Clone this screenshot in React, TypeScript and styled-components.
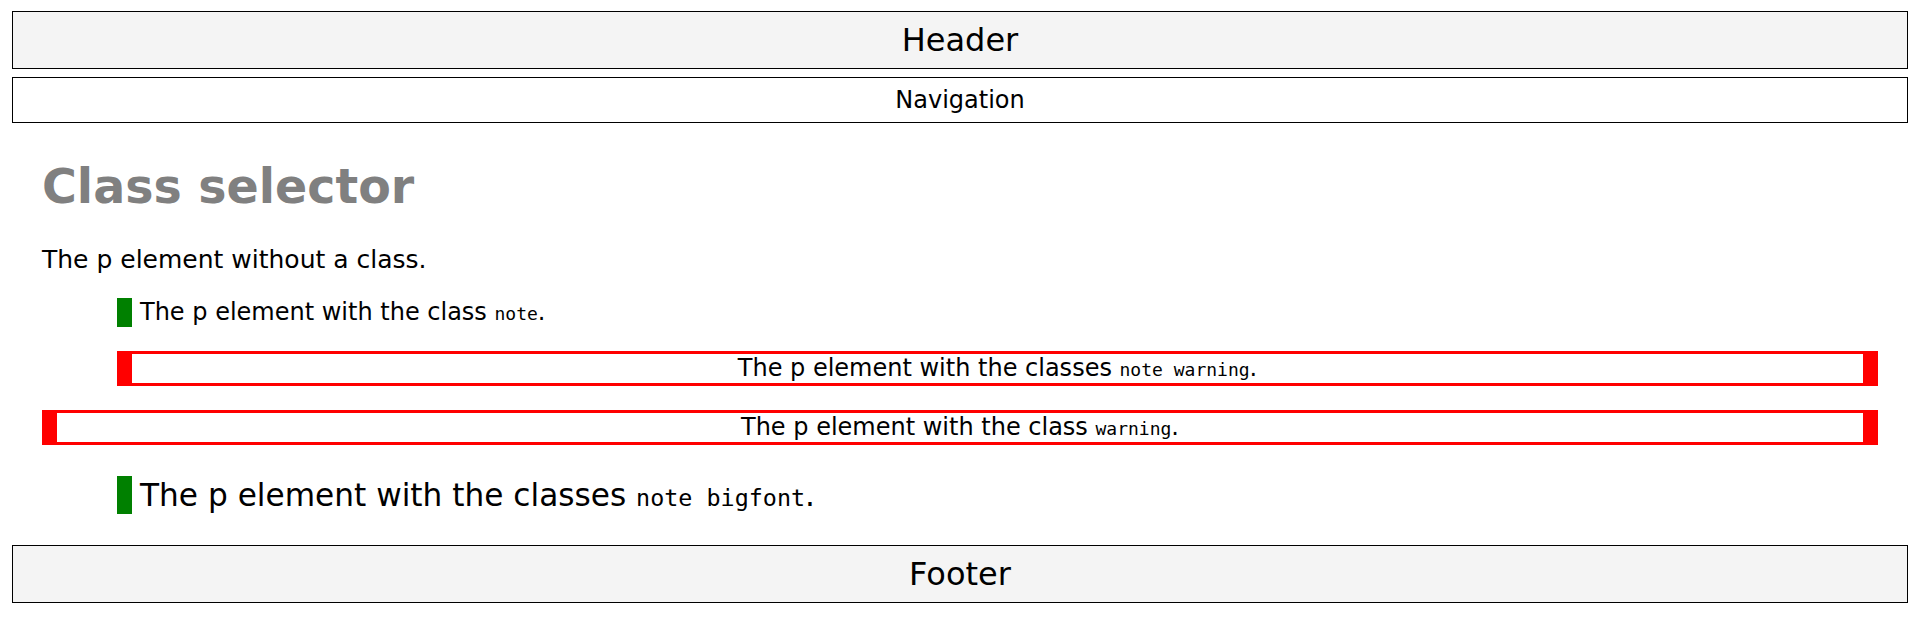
import React from "react";
import styled, { createGlobalStyle, css } from "styled-components";

const GlobalStyle = createGlobalStyle`
  html, body {
    margin: 0;
    padding: 0;
    background: #ffffff;
  }
  body {
    font-family: "DejaVu Sans", Verdana, sans-serif;
    font-size: 24px;
    color: #000000;
  }
`;

const Page = styled.div`
  padding: 11px 12px 0 12px;
`;

const Header = styled.header`
  margin: 0 0 8px 0;
  padding: 10px 0;
  border: 1px solid #000000;
  background: #f4f4f4;
  text-align: center;
  font-size: 32px;
  line-height: 36px;
`;

const Nav = styled.nav`
  padding: 8px 0;
  border: 1px solid #000000;
  background: #ffffff;
  text-align: center;
  font-size: 24px;
  line-height: 28px;
`;

const Main = styled.main`
  display: flow-root;
  padding: 0 30px;
`;

const Title = styled.h1`
  margin: 36px 0 30px 0;
  font-size: 47.5px;
  line-height: 56px;
  font-weight: bold;
  color: #808080;
`;

type ParaProps = { $note?: boolean; $warning?: boolean; $big?: boolean; $plain?: boolean };

const Para = styled.p<ParaProps>`
  margin: 24px 0;
  font-size: 24px;
  line-height: 29px;

  ${(p) =>
    p.$plain &&
    css`
      font-size: 25px;
    `}

  ${(p) =>
    p.$note &&
    css`
      margin-left: 75px;
      padding-left: 8px;
      border-left: 15px solid #008000;
    `}

  ${(p) =>
    p.$warning &&
    css`
      padding-left: 0;
      border: 3px solid #ff0000;
      border-left: 15px solid #ff0000;
      border-right: 15px solid #ff0000;
      text-align: center;
    `}

  ${(p) =>
    p.$big &&
    css`
      margin: 31px 0 31px 75px;
      font-size: 31.2px;
      line-height: 38px;
    `}
`;

const Code = styled.code`
  font-family: "DejaVu Sans Mono", "Liberation Mono", monospace;
  font-size: 0.75em;
  line-height: 1;
`;

const Footer = styled.footer`
  padding: 10px 0;
  border: 1px solid #000000;
  background: #f4f4f4;
  text-align: center;
  font-size: 32px;
  line-height: 36px;
`;

export default function App() {
  return (
    <>
      <GlobalStyle />
      <Page>
        <Header>Header</Header>
        <Nav>Navigation</Nav>
        <Main>
          <Title>Class selector</Title>
          <Para $plain>The p element without a class.</Para>
          <Para $note>
            The p element with the class <Code>note</Code>.
          </Para>
          <Para $note $warning>
            The p element with the classes <Code>note warning</Code>.
          </Para>
          <Para $warning>
            The p element with the class <Code>warning</Code>.
          </Para>
          <Para $note $big>
            The p element with the classes <Code>note bigfont</Code>.
          </Para>
        </Main>
        <Footer>Footer</Footer>
      </Page>
    </>
  );
}
